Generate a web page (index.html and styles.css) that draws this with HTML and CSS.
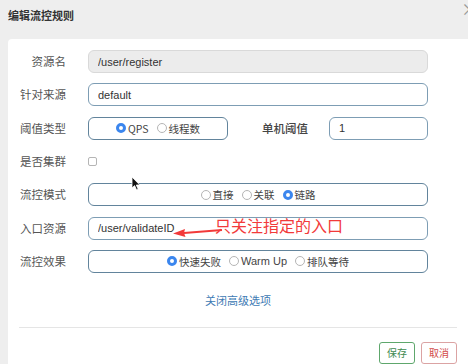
FILE: index.html
```html
<!DOCTYPE html>
<html lang="zh-CN">
<head>
    <meta charset="UTF-8">
    <meta name="viewport" content="width=device-width, initial-scale=1.0">
    <title>编辑流控规则</title>
    <link rel="stylesheet" href="styles.css">
</head>
<body>
    <div class="dialog-head">
        <h4>编辑流控规则</h4>
        <span class="close">×</span>
    </div>

    <div class="dialog-body">
        <div class="row">
            <label class="label">资源名</label>
            <input class="input readonly" type="text" value="/user/register" readonly>
        </div>

        <div class="row">
            <label class="label">针对来源</label>
            <input class="input" type="text" value="default">
        </div>

        <div class="row">
            <label class="label">阈值类型</label>
            <div class="radio-box short">
                <span class="radio"><i class="dot checked"></i>QPS</span>
                <span class="radio"><i class="dot"></i>线程数</span>
            </div>
            <label class="label mid">单机阈值</label>
            <input class="input small" type="text" value="1">
        </div>

        <div class="row">
            <label class="label">是否集群</label>
            <span class="checkbox"></span>
        </div>

        <div class="row">
            <label class="label">流控模式</label>
            <div class="radio-box">
                <span class="radio"><i class="dot"></i>直接</span>
                <span class="radio"><i class="dot"></i>关联</span>
                <span class="radio"><i class="dot checked"></i>链路</span>
            </div>
        </div>

        <div class="row">
            <label class="label">入口资源</label>
            <input class="input" type="text" value="/user/validateID">
        </div>

        <div class="row">
            <label class="label">流控效果</label>
            <div class="radio-box">
                <span class="radio"><i class="dot checked"></i>快速失败</span>
                <span class="radio latin"><i class="dot"></i>Warm Up</span>
                <span class="radio"><i class="dot"></i>排队等待</span>
            </div>
        </div>

        <div class="advanced">
            <a href="#">关闭高级选项</a>
        </div>

        <div class="footer">
            <button class="btn save">保存</button>
            <button class="btn cancel">取消</button>
        </div>
    </div>

    <!-- annotation drawn over the screenshot -->
    <div class="note">只关注指定的入口</div>
    <svg class="note-arrow" width="52" height="12" viewBox="0 0 52 12">
        <path d="M50 4 L12 7" stroke="#f23a3a" stroke-width="2" fill="none"/>
        <path d="M1 7.5 L13 3 L12 7 L13.5 11 Z" fill="#f23a3a"/>
    </svg>

    <svg class="cursor" width="10" height="15" viewBox="0 0 10 15">
        <path d="M1 1 L1 12 L3.6 9.6 L5.6 14 L7.2 13.3 L5.3 9 L8.8 9 Z" fill="#111" stroke="#fff" stroke-width="0.8"/>
    </svg>
</body>
</html>
```

FILE: styles.css
```css
body {
    margin: 0;
    background: #eeeeee;
    font-family: "Noto Sans CJK SC", "Liberation Sans", sans-serif;
    color: #555;
    height: 364px;
    overflow: hidden;
}

.dialog-head {
    height: 39px;
    padding-left: 8px;
    display: flex;
    align-items: flex-start;
}

.dialog-head h4 {
    margin: 8px 0 0;
    font-size: 11px;
    line-height: 15px;
    font-weight: 700;
    color: #333;
}

.close {
    position: absolute;
    left: 461px;
    top: 0;
    font-size: 17px;
    color: #999;
    line-height: 18px;
}

.dialog-body {
    margin-left: 8px;
    background: #fff;
    border-radius: 4px 0 0 0;
    padding-top: 11px;
    height: 314px;
}

.row {
    display: flex;
    align-items: center;
    height: 23px;
    margin-bottom: 10.33px;
}

.label {
    width: 58px;
    text-align: right;
    font-size: 11.5px;
    line-height: 23px;
    color: #555;
    margin-right: 22px;
    flex: none;
}

.label.mid {
    width: 80px;
    margin-right: 21px;
    font-weight: 500;
    color: #444;
}

.input {
    box-sizing: border-box;
    width: 340px;
    height: 23px;
    border: 1px solid #7d9db4;
    border-radius: 6px;
    padding: 0 9px;
    font-family: "Liberation Sans", sans-serif;
    font-size: 11px;
    color: #333;
    background: #fff;
    outline: none;
}

.input.readonly {
    background: #ececec;
    border-color: #d9d9d9;
}

.input.small {
    width: 99px;
}

.radio-box {
    box-sizing: border-box;
    width: 340px;
    height: 23px;
    border: 1px solid #62849c;
    border-radius: 6px;
    display: flex;
    justify-content: center;
    align-items: center;
    gap: 8px;
}

.radio-box.short {
    width: 140px;
}

.radio {
    display: flex;
    align-items: center;
    font-size: 10.5px;
    color: #444;
}

.radio.latin {
    font-family: "Liberation Sans", sans-serif;
    font-size: 11px;
}

.dot {
    box-sizing: border-box;
    width: 10px;
    height: 10px;
    border-radius: 50%;
    border: 1px solid #b5b5b5;
    background: #fff;
    margin-right: 2px;
}

.dot.checked {
    border: 3px solid #3b86ee;
    background: #fff;
}

.checkbox {
    box-sizing: border-box;
    width: 9px;
    height: 9px;
    border: 1px solid #b5b5b5;
    border-radius: 2px;
    margin-left: 0;
}

.advanced {
    text-align: center;
    margin-top: 18px;
    line-height: 14px;
}

.advanced a {
    font-size: 11px;
    color: #3d7ab4;
    text-decoration: none;
}

.footer {
    margin: 20px 11px 0;
    border-top: 1px solid #e5e5e5;
    padding-top: 14px;
    display: flex;
    justify-content: flex-end;
    gap: 6px;
}

.btn {
    width: 36px;
    height: 22px;
    padding: 0;
    background: #fff;
    border-radius: 3px;
    font-family: "Noto Sans CJK SC", sans-serif;
    font-size: 10px;
}

.btn.save {
    border: 1px solid #5ea76c;
    color: #3f8a4f;
}

.btn.cancel {
    border: 1px solid #dba3a3;
    color: #d24b4b;
}

.note {
    position: absolute;
    left: 215px;
    top: 214px;
    font-size: 16px;
    line-height: 22px;
    color: #f23a3a;
}

.note-arrow {
    position: absolute;
    left: 172px;
    top: 226px;
}

.cursor {
    position: absolute;
    left: 131px;
    top: 176px;
}
```
